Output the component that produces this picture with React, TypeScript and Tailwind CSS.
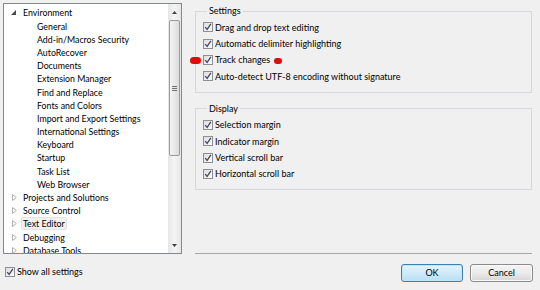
import React from "react";

function Check() {
  return (
    <span className="relative flex h-[10px] w-[10px] shrink-0 items-center justify-center border border-[#8f8f8f] bg-linear-to-br from-[#dedede] to-[#fbfbfb]">
      <svg width="8" height="8" viewBox="0 0 8 8" className="block">
        <path d="M1.2 4.2 L3.1 6.4 L6.9 0.9" fill="none" stroke="#3f4a66" strokeWidth="1.3" />
      </svg>
    </span>
  );
}

function CheckRow({ label }: { label: string }) {
  return (
    <div className="flex h-[16.4px] items-center gap-[2px]">
      <Check />
      <span className="leading-none">{label}</span>
    </div>
  );
}

function Expanded() {
  return (
    <svg width="5" height="5" viewBox="0 0 5 5" className="block">
      <path d="M5 0 L5 5 L0 5 Z" fill="#4a4a4a" />
    </svg>
  );
}

function Collapsed() {
  return (
    <svg width="5" height="7" viewBox="0 0 5 7" className="block">
      <path d="M0.5 0.5 L4.3 3.5 L0.5 6.5 Z" fill="none" stroke="#a6a6a6" strokeWidth="0.9" />
    </svg>
  );
}

const children = [
  "General",
  "Add-in/Macros Security",
  "AutoRecover",
  "Documents",
  "Extension Manager",
  "Find and Replace",
  "Fonts and Colors",
  "Import and Export Settings",
  "International Settings",
  "Keyboard",
  "Startup",
  "Task List",
  "Web Browser",
];

const tops = ["Projects and Solutions", "Source Control", "Text Editor", "Debugging", "Database Tools"];

export default function App() {
  return (
    <div className="relative flex h-[290px] w-[540px] flex-col overflow-hidden bg-[#f0f0f0] font-[Lato,sans-serif] text-[9px] text-[#000]">
      <div className="flex h-[254px]">
        {/* Tree */}
        <div className="ml-[3px] mt-[3px] flex h-[251px] w-[179px] border border-[#828790] bg-white text-[8.8px]">
          <div className="flex flex-1 flex-col overflow-hidden pt-[2.4px]">
            <div className="flex h-[13.2px] shrink-0 items-center">
              <span className="flex w-[19px] justify-end pr-[7px]">
                <Expanded />
              </span>
              <span>Environment</span>
            </div>
            {children.map((c) => (
              <div key={c} className="flex h-[13.2px] shrink-0 items-center pl-[33px]">
                <span>{c}</span>
              </div>
            ))}
            {tops.map((t) => (
              <div key={t} className="flex h-[13.2px] shrink-0 items-center">
                <span className="flex w-[19px] justify-end pr-[6px]">
                  <Collapsed />
                </span>
                {t === "Text Editor" ? (
                  <span className="-ml-[2px] rounded-[2px] border border-[#e2e2e2] bg-[#f1f1f1] px-[1px] leading-[11px]">{t}</span>
                ) : (
                  <span>{t}</span>
                )}
              </div>
            ))}
          </div>
          {/* scrollbar */}
          <div className="flex w-[13px] flex-col bg-linear-to-r from-[#e6e6e6] via-[#f4f4f4] to-[#e6e6e6]">
            <div className="flex h-[16px] items-center justify-center">
              <svg width="5" height="3" viewBox="0 0 5 3">
                <path d="M0 3 L2.5 0 L5 3 Z" fill="#404040" />
              </svg>
            </div>
            <div className="mx-[1px] flex h-[136px] items-center justify-center rounded-[2px] border border-[#9a9a9a] bg-linear-to-r from-[#f5f5f5] to-[#dcdcdc]">
              <div className="flex flex-col gap-[1px]">
                <div className="h-px w-[5px] bg-[#707070]" />
                <div className="h-px w-[5px] bg-[#707070]" />
                <div className="h-px w-[5px] bg-[#707070]" />
              </div>
            </div>
            <div className="flex-1" />
            <div className="flex h-[16px] items-center justify-center">
              <svg width="5" height="3" viewBox="0 0 5 3">
                <path d="M0 0 L2.5 3 L5 0 Z" fill="#404040" />
              </svg>
            </div>
          </div>
        </div>

        {/* Right column */}
        <div className="ml-[13px] flex w-[337px] flex-col pt-[4px]">
          <fieldset className="border border-[#d5d9dd] pb-[7px] pl-[7px]">
            <legend className="ml-[4px] px-[2px] leading-[14px]">Settings</legend>
            <div className="pt-[1px]">
              <CheckRow label="Drag and drop text editing" />
              <CheckRow label="Automatic delimiter highlighting" />
              <CheckRow label="Track changes" />
              <CheckRow label="Auto-detect UTF-8 encoding without signature" />
            </div>
          </fieldset>
          <fieldset className="mt-[9px] h-[88px] border border-[#d5d9dd] pl-[7px]">
            <legend className="ml-[4px] px-[2px] leading-[14px]">Display</legend>
            <div className="pt-[1px]">
              <CheckRow label="Selection margin" />
              <CheckRow label="Indicator margin" />
              <CheckRow label="Vertical scroll bar" />
              <CheckRow label="Horizontal scroll bar" />
            </div>
          </fieldset>
          <div className="mt-auto h-px bg-[#a8a8a8]" />
        </div>
      </div>

      {/* Bottom row */}
      <div className="flex flex-1 items-center pl-[5px] pr-[7px]">
        <div className="flex items-center gap-[2px]">
          <Check />
          <span>Show all settings</span>
        </div>
        <div className="ml-auto mt-[1px] flex gap-[7px]">
          <button className="flex h-[18px] w-[62px] items-center justify-center rounded-[3px] border border-[#3c7fb1] bg-linear-to-b from-[#e5f4fc] to-[#b9e0f6] shadow-[inset_0_0_0_1px_#bfe6fb]">
            OK
          </button>
          <button className="flex h-[18px] w-[63px] items-center justify-center rounded-[3px] border border-[#8a8a8a] bg-linear-to-b from-[#f4f4f4] via-[#ebebeb] to-[#d6d6d6] shadow-[inset_0_0_0_1px_#fafafa]">
            Cancel
          </button>
        </div>
      </div>

      {/* red annotations */}
      <div className="absolute left-[190px] top-[57px] h-[7px] w-[11px] rounded-full bg-[#e00b0b]" />
      <div className="absolute left-[274px] top-[58px] h-[6px] w-[8px] rounded-full bg-[#e00b0b]" />
    </div>
  );
}
